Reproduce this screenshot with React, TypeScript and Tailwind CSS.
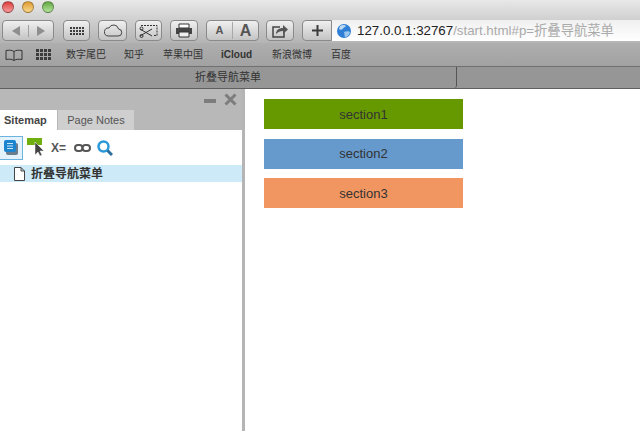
import React from "react";

const cjk = `font-['Liberation_Sans','Noto_Sans_CJK_SC',sans-serif]`;

const Light = ({ color }: { color: string }) => (
  <div className={`w-[12px] h-[12px] rounded-full border border-black/30 bg-gradient-to-b ${color}`} />
);

const ToolButton = ({ w, children }: { w: string; children: React.ReactNode }) => (
  <div
    className={`${w} h-[21px] shrink-0 rounded-[4px] border border-[#8a8a8a] bg-gradient-to-b from-[#f0f0f0] to-[#c4c4c4] flex items-center justify-center text-[#4a4a4a]`}
  >
    {children}
  </div>
);

const DotGrid = ({ cols, rows, size }: { cols: number; rows: number; size: string }) => (
  <div className="grid gap-[1px]" style={{ gridTemplateColumns: `repeat(${cols}, 1fr)` }}>
    {Array.from({ length: cols * rows }).map((_, i) => (
      <div key={i} className={`${size} bg-[#3c3c3c]`} />
    ))}
  </div>
);

const bookmarks = [
  { label: "数字尾巴", w: "w-[58px]" },
  { label: "知乎", w: "w-[39px]" },
  { label: "苹果中国", w: "w-[58px]" },
  { label: "iCloud", w: "w-[51px]" },
  { label: "新浪微博", w: "w-[59px]" },
  { label: "百度", w: "w-[30px]" },
];

const sections = [
  { label: "section1", color: "bg-[#669900]" },
  { label: "section2", color: "bg-[#6699cc]" },
  { label: "section3", color: "bg-[#f29661]" },
];

export default function App() {
  return (
    <div className={`w-[640px] h-[431px] overflow-hidden flex flex-col bg-white ${cjk}`}>
      {/* window chrome */}
      <div className="h-[67px] shrink-0 flex flex-col border-b border-[#707070]">
        <div className="h-[43px] shrink-0 flex flex-col bg-gradient-to-b from-[#e8e8e8] to-[#b4b4b4]">
          <div className="h-[20px] flex items-start gap-[8px] pl-[2px] pt-[1px]">
            <Light color="from-[#d93a3a] to-[#f79a9a]" />
            <Light color="from-[#e09a2a] to-[#f8d88a]" />
            <Light color="from-[#62a844] to-[#b4e49a]" />
          </div>
          <div className="h-[23px] flex items-start pl-[2px]">
            <ToolButton w="w-[52px]">
              <svg width="46" height="12" viewBox="0 0 46 12">
                <path d="M15 1v10L7 6z" fill="#8e8e8e" />
                <path d="M23.500 0v12" stroke="#a0a0a0" />
                <path d="M32 1v10l8-5z" fill="#8e8e8e" />
              </svg>
            </ToolButton>
            <div className="w-[9px] shrink-0" />
            <ToolButton w="w-[27px]">
              <DotGrid cols={5} rows={3} size="w-[2px] h-[2px]" />
            </ToolButton>
            <div className="w-[8px] shrink-0" />
            <ToolButton w="w-[29px]">
              <svg width="20" height="13" viewBox="0 0 20 13" fill="none" stroke="#444" strokeWidth="1">
                <path d="M5 12h10a3.500 3.500 0 0 0 .5-7A5 5 0 0 0 6 4a4 4 0 0 0-1 8z" />
              </svg>
            </ToolButton>
            <div className="w-[8px] shrink-0" />
            <ToolButton w="w-[27px]">
              <svg width="20" height="14" viewBox="0 0 20 14" fill="none" stroke="#333">
                <path d="M2 1.500h16v10h-3" strokeDasharray="2 1" />
                <path d="M1 12l12-7M1 5l12 7" />
                <circle cx="2.500" cy="4.500" r="1.500" />
                <circle cx="2.500" cy="12" r="1.500" />
              </svg>
            </ToolButton>
            <div className="w-[8px] shrink-0" />
            <ToolButton w="w-[28px]">
              <svg width="18" height="15" viewBox="0 0 18 15">
                <path d="M4 1h10v4H4z" fill="#fff" stroke="#333" />
                <path d="M1 5h16v6H1z" fill="#444" />
                <path d="M4 9h10v5H4z" fill="#eee" stroke="#333" />
              </svg>
            </ToolButton>
            <div className="w-[8px] shrink-0" />
            <div className="w-[53px] h-[21px] shrink-0 rounded-[4px] border border-[#8a8a8a] bg-gradient-to-b from-[#f0f0f0] to-[#c4c4c4] flex items-center text-[#555] font-bold">
              <span className="w-[26px] text-center text-[11px] border-r border-[#a8a8a8]">A</span>
              <span className="flex-1 text-center text-[16px] leading-none">A</span>
            </div>
            <div className="w-[7px] shrink-0" />
            <ToolButton w="w-[28px]">
              <svg width="18" height="14" viewBox="0 0 18 14" fill="none">
                <path d="M9 3H2v10h11V8" stroke="#444" strokeWidth="1.500" />
                <path d="M5 10c0-4 3-6 7-6V1l5 4.500-5 4.500V7c-3 0-5 1-7 3z" fill="#555" />
              </svg>
            </ToolButton>
            <div className="w-[8px] shrink-0" />
            <div className="w-[30px] h-[21px] shrink-0 rounded-l-[4px] border border-[#8a8a8a] bg-gradient-to-b from-[#f0f0f0] to-[#c4c4c4] flex items-center justify-center text-[#444]">
              <svg width="11" height="11" viewBox="0 0 11 11" stroke="#3c3c3c" strokeWidth="2">
                <path d="M5.500 0v11M0 5.500h11" />
              </svg>
            </div>
            <div className="flex-1 h-[21px] bg-gradient-to-b from-[#f0f0f0] to-white flex items-center pl-[5px] text-[13.3px] whitespace-nowrap">
              <svg className="mr-[6px] shrink-0" width="14" height="14" viewBox="0 0 14 14">
                <circle cx="7" cy="7" r="7" fill="#2f7fd6" />
                <path d="M3 2c2-1.500 5-1.500 6 0-1 1.500-2 1-3 2.500S3 6 2 5z" fill="#bcd9f2" />
                <path d="M7 8c2-1 5-1 6 0-.5 3-3 5-5 5-1-1 0-3-1-5z" fill="#9cc6ec" />
              </svg>
              <span className="text-[#222] font-medium">127.0.0.1:32767</span>
              <span className="text-[#aaa]">/start.html#p=折叠导航菜单</span>
            </div>
          </div>
        </div>
        <div className="flex-1 flex items-center text-[10px] text-[#333] pl-[5px] bg-gradient-to-b from-[#aeaeae] to-[#a2a2a2]">
          <svg className="w-[18px] shrink-0" width="18" height="12" viewBox="0 0 18 12" fill="none" stroke="#333">
            <path d="M9 2.500C7 1 4 1 1 1.500v9c3-.5 6-.5 8 1 2-1.500 5-1.500 8-1v-9c-3-.5-6-.5-8 1zM9 2.500v9" />
          </svg>
          <div className="w-[13px] shrink-0" />
          <DotGrid cols={4} rows={3} size="w-[3px] h-[3px]" />
          <div className="w-[15px] shrink-0" />
          {bookmarks.map((b) => (
            <span
              key={b.label}
              className={`${b.w} shrink-0 whitespace-nowrap ${b.label === "iCloud" ? "font-bold" : ""}`}
            >
              {b.label}
            </span>
          ))}
        </div>
      </div>

      {/* tab strip */}
      <div className="h-[22px] shrink-0 flex bg-[#969696] border-b border-[#5f5f5f] text-[11px] text-[#333]">
        <div className="w-[457px] shrink-0 flex items-center justify-center border-r border-[#555] rounded-br-[3px]">
          折叠导航菜单
        </div>
        <div className="flex-1" />
      </div>

      {/* page */}
      <div className="flex-1 min-h-0 flex">
        <div className="w-[242px] shrink-0 flex flex-col bg-white">
          <div className="h-[41px] shrink-0 bg-[#b8b8b8] flex flex-col">
            <div className="h-[21px] flex items-center justify-end gap-[8px] pr-[5px]">
              <div className="w-[12px] h-[4px] mt-[3px] bg-[#7d7d7d]" />
              <svg width="13" height="13" viewBox="0 0 13 13" stroke="#7d7d7d" strokeWidth="3">
                <path d="M1.500 1.500l10 10M11.500 1.500l-10 10" />
              </svg>
            </div>
            <div className="flex-1 flex text-[11px] leading-none font-['Liberation_Sans',sans-serif]">
              <div className="w-[57px] bg-white flex items-center pl-[4px] font-bold text-[#444]">Sitemap</div>
              <div className="w-[76px] bg-[#cfcfcf] flex items-center justify-center text-[#555] ml-[1px]">Page Notes</div>
            </div>
          </div>
          <div className="h-[35px] shrink-0 flex items-center">
            <div className="w-[23px] h-[24px] border border-[#6db3e0] border-l-0 bg-[#e4f2fb] flex items-center justify-center">
              <svg width="14" height="15" viewBox="0 0 14 15">
                <rect x="2" y="3" width="12" height="12" rx="2" fill="#6a7d8c" />
                <rect x="0" y="0" width="12" height="12" rx="2" fill="#1c85d0" />
                <path d="M3 3.500h6M3 6h6M3 8.500h6" stroke="#cde6f7" />
              </svg>
            </div>
            <svg className="ml-[4px] shrink-0" width="17" height="19" viewBox="0 0 17 19">
              <rect x="0" y="0" width="15" height="7" fill="#6fb010" />
              <path d="M8 4v13l3-3 2 4 2-1-2-4h4z" fill="#444" stroke="#fff" strokeWidth=".5" />
            </svg>
            <span className="ml-[7px] text-[12px] font-bold text-[#555] font-['Liberation_Sans',sans-serif]">X=</span>
            <svg className="ml-[8px] shrink-0" width="17" height="8" viewBox="0 0 17 8" fill="none" stroke="#555" strokeWidth="2">
              <rect x="1" y="1" width="7.500" height="6" rx="3" />
              <rect x="8.500" y="1" width="7.500" height="6" rx="3" />
            </svg>
            <svg className="ml-[6px] shrink-0" width="16" height="16" viewBox="0 0 16 16" fill="none" stroke="#2a9ad8" strokeWidth="2.500">
              <circle cx="6.500" cy="6.500" r="5" />
              <path d="M10.500 10.500l4.500 4.500" stroke="#2b6f9f" strokeWidth="3" />
            </svg>
          </div>
          <div className="h-[17px] shrink-0 bg-[#cceaf8] flex items-center pl-[14px] text-[12px] font-bold text-[#333]">
            <svg className="mr-[6px] shrink-0" width="11" height="14" viewBox="0 0 11 14" fill="#fff" stroke="#444">
              <path d="M.5.500h6.500l3.500 3.500v9.500h-10zM7 .5v3.500h3.500" />
            </svg>
            折叠导航菜单
          </div>
        </div>
        <div className="w-[3px] shrink-0 bg-[#b5b5b5]" />
        <div className="flex-1 pl-[19px] pt-[10px] flex flex-col gap-[9.5px] bg-white">
          {sections.map((s) => (
            <div
              key={s.label}
              className={`w-[199px] h-[30px] pt-[1px] flex items-center justify-center text-[13px] text-[#333] font-['Liberation_Sans',sans-serif] ${s.color}`}
            >
              {s.label}
            </div>
          ))}
        </div>
      </div>
    </div>
  );
}
